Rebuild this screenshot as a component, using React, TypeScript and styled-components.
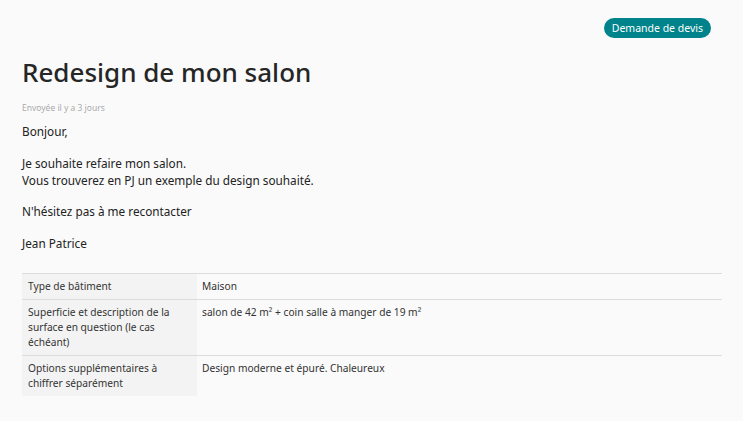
import React from "react";
import styled, { createGlobalStyle } from "styled-components";

const GlobalStyle = createGlobalStyle`
  html, body {
    margin: 0;
    padding: 0;
    background: #fafafa;
  }
  body {
    font-family: "Noto Sans", "Open Sans", sans-serif;
    color: #222;
  }
`;

interface Detail {
  label: string;
  value: string;
}

const details: Detail[] = [
  { label: "Type de bâtiment", value: "Maison" },
  {
    label: "Superficie et description de la surface en question (le cas échéant)",
    value: "salon de 42 m² + coin salle à manger de 19 m²",
  },
  {
    label: "Options supplémentaires à chiffrer séparément",
    value: "Design moderne et épuré. Chaleureux",
  },
];

function App() {
  return (
    <>
      <GlobalStyle />
      <Page>
        <TopBar>
          <Badge>Demande de devis</Badge>
        </TopBar>
        <Title>Redesign de mon salon</Title>
        <Sent>Envoyée il y a 3 jours</Sent>
        <Message>
          <p>Bonjour,</p>
          <p>
            Je souhaite refaire mon salon.
            <br />
            Vous trouverez en PJ un exemple du design souhaité.
          </p>
          <p>N'hésitez pas à me recontacter</p>
          <p>Jean Patrice</p>
        </Message>
        <Table>
          <tbody>
            {details.map((d) => (
              <tr key={d.label}>
                <Label>{d.label}</Label>
                <Value>{d.value}</Value>
              </tr>
            ))}
          </tbody>
        </Table>
      </Page>
    </>
  );
}

export default App;

const Page = styled.div`
  padding: 18px 21px 24px 22px;
`;

const TopBar = styled.div`
  display: flex;
  justify-content: flex-end;
  padding-right: 11px;
`;

const Badge = styled.span`
  display: inline-flex;
  align-items: center;
  height: 20px;
  padding: 0 8px;
  border-radius: 10px;
  background: #00838a;
  color: #fff;
  font-size: 10.5px;
`;

const Title = styled.h1`
  margin: 14px 0 0;
  font-size: 26px;
  font-weight: 500;
  line-height: 40px;
  color: #262626;
`;

const Sent = styled.div`
  margin-top: 10px;
  font-size: 8.5px;
  color: #aaa;
`;

const Message = styled.div`
  margin-top: 10px;
  font-size: 11.75px;
  line-height: 17px;
  color: #222;

  p {
    margin: 0 0 14.5px;
  }
`;

const Table = styled.table`
  width: 100%;
  margin-top: 21px;
  border-collapse: collapse;
  font-size: 10.2px;
  line-height: 15px;
  color: #333;

  tr {
    border-top: 1px solid #dcdcdc;
  }
`;

const Label = styled.td`
  width: 163px;
  padding: 5px 6px 5px;
  vertical-align: top;
  background: #f3f3f3;
`;

const Value = styled.td`
  padding: 5px 5px 5px;
  vertical-align: top;
`;
